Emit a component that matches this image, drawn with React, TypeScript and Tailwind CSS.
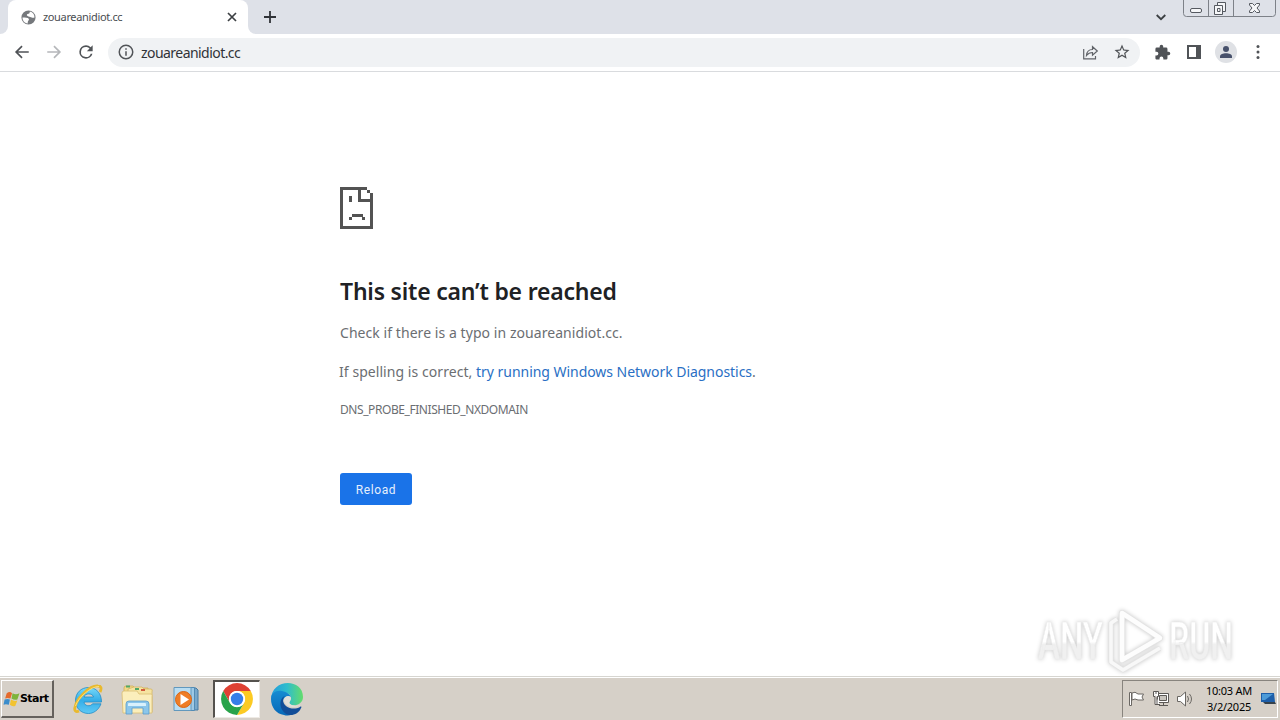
import type { ReactNode } from 'react';

function Icon({ children, size = 24, className = '' }: { children: ReactNode; size?: number; className?: string }) {
  return (
    <svg width={size} height={size} viewBox="0 0 24 24" fill="currentColor" className={`block shrink-0 ${className}`}>
      {children}
    </svg>
  );
}

function TabStrip() {
  return (
    <div className="flex h-[34px] bg-[#dee1e8]">
      <div className="h-[34px] w-2 bg-white">
        <div className="h-[34px] w-2 rounded-br-lg bg-[#dee1e8]" />
      </div>
      <div className="flex h-[34px] w-[240px] items-center rounded-t-lg bg-white pl-3">
        <Icon size={17} className="text-[#75787c]">
          <path d="M12 2a10 10 0 1 0 0 20 10 10 0 0 0 0-20zM3.500 12c4 0 8 0 9 2 .8 2-2 2-1.500 6.500C6 20 3.500 16 3.500 12zM12 10.500c-2-.5-3-1.500-2-3 1-1.300 3-.5 3.500-2 .4-1 .2-1.500.5-2 4 1 6.500 4 6.500 8.500-1 0-2.500 1-4 0-1.500-1-2.500-1-4.500-1.500z" />
        </Icon>
        <span className="ml-[6px] w-[184px] text-[11px] leading-4 tracking-[-0.35px] text-[#4a4d51]">zouareanidiot.cc</span>
        <svg width="10" height="10" viewBox="0 0 10 10" className="block shrink-0" stroke="#3c4043" strokeWidth="1.7">
          <path d="M1 1l8 8M9 1L1 9" />
        </svg>
      </div>
      <div className="h-[34px] w-2 bg-white">
        <div className="h-[34px] w-2 rounded-bl-lg bg-[#dee1e8]" />
      </div>
      <svg width="12" height="12" viewBox="0 0 12 12" className="mt-[11px] ml-2 block" stroke="#303338" strokeWidth="1.8">
        <path d="M6 0v12M0 6h12" />
      </svg>
      <svg width="10" height="7" viewBox="0 0 10 7" className="mt-[14px] mr-[17px] ml-auto block" fill="none" stroke="#3c4043" strokeWidth="1.8">
        <path d="M.7 1L5 5.2 9.300 1" />
      </svg>
      <svg width="97" height="18" viewBox="0 0 97 18" className="block" fill="none" stroke="#7d8188">
        <path d="M.5 0v13.500q0 3 3 3h86q3 0 3-3V0M25.500 0v16.500M50.500 0v16.500" />
        <g fill="#f5f6f8" stroke="#555960">
          <rect x="7.500" y="8.500" width="11" height="4" rx="1.500" />
          <path d="M34.500 2.500h8v9h-8z" />
          <path d="M31.500 5.500h8v9h-8z" />
          <path d="M34.500 8.500h2.500v3h-2.500z" />
          <path d="M66.500 3.500h3l2 2 2-2h3v1.500L74 8l2.500 3v1.500h-3l-2-2-2 2h-3V11L69 8l-2.500-3z" />
        </g>
      </svg>
    </div>
  );
}

function Toolbar() {
  return (
    <div className="flex h-[38px] items-center border-b border-[#d9dbde] bg-white pb-px pl-[13px] text-[#505357]">
      <Icon size={18}><path d="M21 10.900H6.800l6-6L11.300 3.400 2.600 12l8.700 8.600 1.500-1.500-6-6H21z" /></Icon>
      <Icon size={18} className="ml-[14px] text-[#b5b7ba]"><path d="M3 10.900h14.200l-6-6 1.500-1.500 8.700 8.600-8.700 8.600-1.500-1.500 6-6H3z" /></Icon>
      <Icon size={20} className="ml-[13px]"><path d="M17.650 6.350A7.950 7.950 0 0 0 12 4a8 8 0 1 0 7.730 10h-2.080A6 6 0 1 1 12 6c1.660 0 3.140.69 4.220 1.780L13 11h7V4z" /></Icon>
      <div className="ml-3 flex h-[29px] w-[1032px] items-center rounded-full bg-[#f0f2f4] pl-[9px]">
        <Icon size={18}><path d="M11 7h2v2h-2zm0 4h2v6h-2zm1-9a10 10 0 1 0 0 20 10 10 0 0 0 0-20zm0 18a8 8 0 1 1 0-16 8 8 0 0 1 0 16z" /></Icon>
        <span className="ml-[6px] pt-px text-[14px] leading-5 tracking-[-0.55px] text-[#303338]">zouareanidiot.cc</span>
        <svg width="17" height="17" viewBox="0 0 17 17" className="mr-[14px] ml-auto block" fill="none" stroke="#606368" strokeWidth="1.200">
          <path d="M1.700 5v9.800h11.800V12M4.500 11.500c.3-3.800 2.500-6 6-6V2.700L15.300 7l-4.800 4.200V8.500c-2.700 0-4.300.8-6 3z" />
        </svg>
        <Icon size={18} className="mr-[9px]"><path d="M22 9.240l-7.190-.62L12 2 9.190 8.630 2 9.240l5.460 4.730L5.820 21 12 17.270 18.180 21l-1.630-7.030zM12 15.400l-3.760 2.270 1-4.280-3.320-2.880 4.380-.38L12 6.100l1.710 4.040 4.380.38-3.320 2.880 1 4.280z" /></Icon>
      </div>
      <Icon size={17} className="ml-[14px]"><path d="M20.500 11H19V7a2 2 0 0 0-2-2h-4V3.500a2.500 2.500 0 0 0-5 0V5H4a2 2 0 0 0-2 2v3.800h1.500a2.700 2.700 0 0 1 0 5.400H2V20c0 1.100.9 2 2 2h3.800v-1.500a2.700 2.700 0 0 1 5.400 0V22H17a2 2 0 0 0 2-2v-4h1.500a2.500 2.500 0 0 0 0-5z" /></Icon>
      <svg width="14" height="14" viewBox="0 0 14 14" className="ml-4 block"><path d="M0 0h14v14H0zM2 2v10h7V2z" fillRule="evenodd" fill="currentColor" /></svg>
      <div className="ml-[14px] flex size-[22px] items-center justify-center rounded-full bg-[#dfe1e5]">
        <svg width="14" height="14" viewBox="0 0 14 14" fill="#47516b"><circle cx="7" cy="4" r="3" /><path d="M1 13v-1.500C1 9.500 4 8.300 7 8.300s6 1.200 6 3.200V13z" /></svg>
      </div>
      <Icon size={20} className="ml-[11px]"><circle cx="12" cy="5.500" r="1.800" /><circle cx="12" cy="12" r="1.800" /><circle cx="12" cy="18.500" r="1.800" /></Icon>
    </div>
  );
}

function Watermark() {
  return (
    <svg width="250" height="70" viewBox="0 0 250 70" className="absolute top-[533px] left-[1026px] overflow-visible [filter:drop-shadow(0_0_2px_#c8c8c8)]">
      <defs>
        <linearGradient id="mark" x1="0" y1="0" x2="0" y2="1"><stop offset=".5" stopColor="#ffffff" /><stop offset=".55" stopColor="#f0f0f0" /></linearGradient>
      </defs>
      <g fill="url(#mark)" stroke="#ececec" strokeWidth=".6" fontFamily="Roboto, sans-serif" fontWeight="500" fontSize="51">
        <text x="12" y="54" textLength="65" lengthAdjust="spacingAndGlyphs">ANY</text>
        <text x="143" y="54" textLength="64" lengthAdjust="spacingAndGlyphs">RUN</text>
      </g>
      <g fill="none" strokeLinejoin="round">
        <path d="M91 14l-6 4v39l12 8 37-22" stroke="#e4e4e4" strokeWidth="5" />
        <path d="M91 14l-6 4v39l12 8 37-22" stroke="#f8f8f8" strokeWidth="3.500" />
        <path d="M96 8L134 33 96 55z" stroke="#e4e4e4" strokeWidth="6" />
        <path d="M96 8L134 33 96 55z" stroke="#fdfdfd" strokeWidth="4.500" />
      </g>
    </svg>
  );
}

function ErrorPage() {
  return (
    <main className="relative h-[604px] bg-white pt-[115px] pl-[340px] font-['Noto_Sans','Open_Sans',sans-serif] text-[#6b6e72]">
      <svg width="33" height="42" viewBox="0 0 11 14" className="block" shapeRendering="crispEdges" fill="#535353">
        <path d="M0 0h9v1H7v3h3V2h1v12H0zM1 1v12h9V5H6V1zM9 1h1v1H9zM3 3h1v2H3zM4 9h3.500v1H4zM3 10h1v1H3zM7.400 10h1v1h-1z" fillRule="evenodd" />
      </svg>
      <h1 className="mt-[46px] text-[23px] leading-8 font-semibold tracking-[-0.2px] whitespace-nowrap text-[#202124]">This site can’t be reached</h1>
      <p className="mt-[14px] text-[14px] leading-6 tracking-[0.06px] whitespace-nowrap">Check if there is a typo in zouareanidiot.cc.</p>
      <p className="mt-[15px] ml-[-1px] text-[14px] leading-6 tracking-[0.06px] whitespace-nowrap">If spelling is correct, <a className="tracking-[-0.04px] text-[#2a6fc4]">try running Windows Network Diagnostics</a>.</p>
      <p className="mt-[16px] text-[12px] leading-5 tracking-[-0.43px] whitespace-nowrap">DNS_PROBE_FINISHED_NXDOMAIN</p>
      <button className="mt-[53px] flex h-8 w-[72px] items-center justify-center rounded-[3px] bg-[#1a73e8] pt-px font-['Roboto',sans-serif] text-[12px] tracking-[0.6px] text-[#e6effc]">Reload</button>
      <Watermark />
    </main>
  );
}

function ExplorerLogo() {
  return (
    <svg width="30" height="32" viewBox="0 0 30 32" className="block">
      <defs><linearGradient id="ie" x2="0" y2="1"><stop stopColor="#77d8f8" /><stop offset=".5" stopColor="#35aee8" /><stop offset="1" stopColor="#5fc9f5" /></linearGradient></defs>
      <path d="M28.500 19H11c.4 4.200 6.500 5 8.500 1.800h8.500C25.500 27.500 20 30.500 15.500 30.500 8 30.500 2.500 25 2.500 17.500S8 4.500 15.500 4.500s13 5.500 13 14.500zM11 14h9.500c-.7-4-8.500-4.300-9.500 0z" fill="url(#ie)" stroke="#218cc6" strokeWidth=".8" fillRule="evenodd" />
      <path d="M27 9c2-4 1-6-2-6C17 2 4 15 2 24c-1 4 1 5.500 4 4" fill="none" stroke="#e9b92d" strokeWidth="2.800" />
      <path d="M26 3.500C18 3 5 15 2.500 23" fill="none" stroke="#fbe17a" />
    </svg>
  );
}

function FolderLogo() {
  return (
    <svg width="32" height="32" viewBox="0 0 32 32" className="block" strokeWidth=".8">
      <path d="M3 4q0-2 2-2h7l2 2h13v24H3z" fill="#f2d987" stroke="#d1ad55" />
      <path d="M13 3h8l2 2h7q2 0 1 3v20H7V5z" fill="#f6e4a1" stroke="#d4b564" />
      <path d="M1 9q0-2 2-2h13l2 3h12q2 0 1 3v16H2z" fill="#fbeebb" stroke="#d9bd71" />
      <path d="M5 2.500h4M14 5h4" stroke="#51a768" strokeWidth="2" /><path d="M20 6h4" stroke="#d25a3c" strokeWidth="2" />
      <path d="M5 30V20q0-3 3-3h17q3 0 3 3v10h-6v-6H11v6z" fill="#8bc6ea" stroke="#5c9ccc" />
      <path d="M7 20q0-1 1-1h16q1 0 1 1v2H7z" fill="#d9f1fc" />
    </svg>
  );
}

function PlayerLogo() {
  return (
    <svg width="28" height="26" viewBox="0 0 28 26" className="block">
      <path d="M12 2h12l2 2v20H12z" fill="#78a8cb" stroke="#477ba2" />
      <path d="M8 1.500h14.500v23H8z" fill="#9ec9e5" stroke="#538bb4" />
      <path d="M2 1.500h17v23H2z" fill="#b9ddf2" stroke="#6298bd" />
      <circle cx="11.500" cy="13.500" r="8" fill="#ef7d26" stroke="#d96514" /><path d="M8.500 8v11l8.500-5.500z" fill="#fff" />
    </svg>
  );
}

function ChromeLogo() {
  return (
    <svg width="32" height="32" viewBox="0 0 32 32" className="block">
      <path d="M2.200 8A16 16 0 0 1 29.800 8H16a8 8 0 0 0-7 12z" fill="#df4133" />
      <path d="M29.800 8A16 16 0 0 1 16 32l7-12a8 8 0 0 0-7-12z" fill="#fcca23" />
      <path d="M16 32A16 16 0 0 1 2.200 8L9 20a8 8 0 0 0 14 0z" fill="#28a34a" />
      <circle cx="16" cy="16" r="8" fill="#fff" /><circle cx="16" cy="16" r="6.200" fill="#367ee9" />
    </svg>
  );
}

function EdgeLogo() {
  return (
    <svg width="32" height="33" viewBox="0 0 32 33" className="block">
      <defs>
        <linearGradient id="edgeTop"><stop stopColor="#249bdc" /><stop offset=".5" stopColor="#2fbdcc" /><stop offset="1" stopColor="#64dc6b" /></linearGradient>
        <linearGradient id="edgeBase" x2="0" y2="1"><stop stopColor="#168cd2" /><stop offset="1" stopColor="#0868b8" /></linearGradient>
      </defs>
      <path d="M0 17C0-5 32-5 32 14c0 8-10 10-13 7-2-2 1-3 1-6 0-4-5-6-10-6-6 0-10 4-10 8z" fill="url(#edgeTop)" />
      <path d="M0 16c0-6 5-9 11-8 5 1 9 4 9 7 0-2-8-3-8 4 0 7 6 13 13 10-4 4-9 4-12 3C5 31 0 24 0 16z" fill="url(#edgeBase)" />
      <path d="M12 14c-6 6-1 19 9 18 5-1 8-4 9-7 1-1 0-2-1-1-7 4-17 0-17-7 0-1 0-2 2-4z" fill="#124d98" />
      <path d="M20 15c0-3-7-3-7 2 0 4 5 7 9 7 3 0 6-1 8-2-4 1-9 1-11-1-2-2 1-3 1-6z" fill="#e3dfd9" />
    </svg>
  );
}

function Taskbar() {
  return (
    <footer className="flex h-11 bg-[#d6d0c8] pt-[4px] shadow-[inset_0_1px_0_#d6d5d0,inset_0_2px_0_#fff]">
      <button className="ml-px flex h-[38px] w-[53px] items-center border-t border-r-2 border-b-2 border-l border-t-white border-r-[#65615c] border-b-[#65615c] border-l-white pt-[2px] pl-px font-['DejaVu_Sans',sans-serif] text-[11px] font-bold tracking-[-0.55px] text-black">
        <svg width="17" height="17" viewBox="0 0 16 16" className="block shrink-0">
          <path d="M3.500 2q3-2 5 0L7 7q-3-1-5 0z" fill="#e56a2c" /><path d="M9 2q3 2 6.500 0l-2 6q-3 1-5.500-1z" fill="#7eb43b" />
          <path d="M1.500 8q3-1 5 0l-1 5q-3-1-5 0z" fill="#3c8dcb" /><path d="M7.500 8q3 2 6 1l-2 5q-3 1-5-1z" fill="#f2c331" />
        </svg>
        <span>Start</span>
      </button>
      <div className="ml-[19px] flex h-[38px] items-center"><ExplorerLogo /></div>
      <div className="ml-[18px] flex h-[38px] items-center pt-px"><FolderLogo /></div>
      <div className="ml-[19px] flex h-[38px] items-center"><PlayerLogo /></div>
      <div className="ml-[13px] flex h-[38px] w-[47px] items-center justify-center border-t-2 border-r border-b border-l-2 border-t-[#55524e] border-r-[#eeeae5] border-b-[#eeeae5] border-l-[#55524e] bg-white pr-px pb-px"><ChromeLogo /></div>
      <div className="ml-[11px] flex h-[38px] items-center"><EdgeLogo /></div>
      <div className="mr-[2px] ml-auto flex h-[38px] w-[156px] items-center border border-t-[#88847e] border-r-white border-b-white border-l-[#88847e] font-['Noto_Sans','Open_Sans',sans-serif] text-[11px] text-black">
        <svg width="18" height="18" viewBox="0 0 18 18" className="ml-[5px] block" fill="#fff" stroke="#6a6763"><path d="M1.500 2.500h2v13h-2z" /><path d="M4 3q3-2 6 1h5.500l-1.500 3 1.500 3H10Q7 8 4 10z" /></svg>
        <svg width="18" height="18" viewBox="0 0 18 18" className="ml-[6px] block" fill="#dedbd6" stroke="#5c5956"><path d="M5.500 3.500h11v9h-11z" fill="#fff" /><path d="M7.500 5.500h7v5h-7z" fill="#c9c5be" /><path d="M7 15.500h9M11.500 12.500v3" /><path d="M1.500 1.500h5v5h-1.500v8h3M1.500 1.500v5H3v8h3" fill="#fff" /><path d="M4 1v3" /></svg>
        <svg width="18" height="18" viewBox="0 0 18 18" className="ml-[6px] block" fill="#fff" stroke="#6a6763"><path d="M1.500 6.500h3L9.500 2v14l-5-4.500h-3z" /><path d="M11.500 6q2 3 0 6M13.500 4q4 5 0 10" fill="none" /></svg>
        <div className="ml-[7px] w-[56px] text-center leading-4 tracking-[-0.25px] whitespace-nowrap"><div>10:03 AM</div><div>3/2/2025</div></div>
        <svg width="15" height="14" viewBox="0 0 15 14" className="ml-[4px] block"><path d="M0 1h13l1 9H0z" fill="#1d5ea9" /><path d="M1 2h11L4 8H1z" fill="#4d9bd8" /><path d="M2 10h12l1 2H4z" fill="#36414b" /></svg>
      </div>
    </footer>
  );
}

export default function App() {
  return (
    <div className="flex h-[720px] w-[1280px] flex-col overflow-hidden bg-white font-['Noto_Sans','Open_Sans',sans-serif]">
      <TabStrip />
      <Toolbar />
      <ErrorPage />
      <Taskbar />
    </div>
  );
}
